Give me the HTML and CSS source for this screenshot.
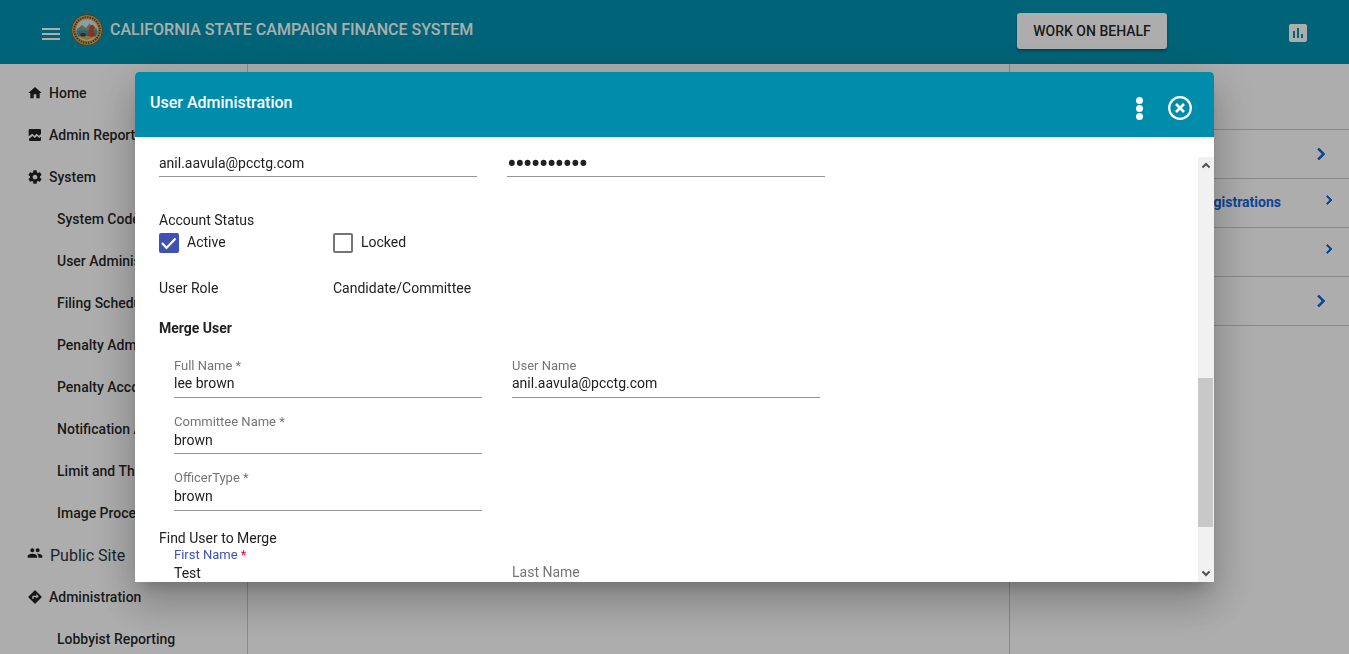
FILE: index.html
```html
<!DOCTYPE html>
<html lang="en">

<head>
    <meta charset="UTF-8">
    <title>California State Campaign Finance System</title>
    <link rel="stylesheet" href="styles.css">
</head>

<body>
<header class="topbar">
    <svg class="menu-icon" viewBox="0 0 24 24"><path d="M3 18h18v-2H3v2zm0-5h18v-2H3v2zm0-7v2h18V6H3z"/></svg>
    <svg class="seal" viewBox="0 0 32 32">
        <circle cx="16" cy="16" r="15.500" fill="#d2ab5e"/>
        <circle cx="16" cy="16" r="15.500" fill="none" stroke="#7a5a2a" stroke-width="1"/>
        <circle cx="16" cy="16" r="12.800" fill="none" stroke="#6b5024" stroke-width="2" stroke-dasharray="1.500 1"/>
        <circle cx="16" cy="16" r="10.800" fill="#cfe6ee"/>
        <path d="M6 15l5-4 4 3 4-5 7 6v2H6z" fill="#7fa283"/>
        <path d="M5.300 16.500h21.400a10.800 10.800 0 0 1-2.400 6.500H7.700a10.800 10.800 0 0 1-2.400-6.500z" fill="#3c93b5"/>
        <path d="M7.700 22h16.600a10.800 10.800 0 0 1-16.600 0z" fill="#c9b24a"/>
        <path d="M17 22l1.500-9 3-2.500 2 2-1 4 1.500 5-3 1.500z" fill="#d8432e"/>
        <circle cx="20.500" cy="9.500" r="1.600" fill="#f0e4c0"/>
        <path d="M9 20c2-1.500 4-1.500 6 0l-1 2.500H10z" fill="#5a3c1c"/>
    </svg>
    <div class="app-title">CALIFORNIA STATE CAMPAIGN FINANCE SYSTEM</div>
    <button class="btn-behalf">WORK ON BEHALF</button>
    <svg class="poll-icon" viewBox="0 0 24 24"><path fill-rule="evenodd" d="M19 3H5c-1.100 0-2 .9-2 2v14c0 1.100.9 2 2 2h14c1.100 0 2-.9 2-2V5c0-1.100-.9-2-2-2zM9 17H7v-7h2v7zm4 0h-2V7h2v10zm4 0h-2v-4h2v4z"/></svg>
</header>

<div class="page">
    <nav class="sidebar">
        <a class="nav-item">
            <svg viewBox="0 0 24 24"><path d="M10 20v-6h4v6h5v-8h3L12 3 2 12h3v8z"/></svg>
            Home
        </a>
        <a class="nav-item">
            <svg viewBox="0 0 24 24"><path fill-rule="evenodd" d="M5 3h14a2 2 0 0 1 2 2v5.500l-3 2.500-3.500-3-3.500 3-3-3-5.500 4V5a2 2 0 0 1 2-2zM3 17.500l5.500-4 3 3 3.500-3 3.500 3 2.500-2V19a2 2 0 0 1-2 2H5a2 2 0 0 1-2-2z"/></svg>
            Admin Reports
        </a>
        <a class="nav-item">
            <svg viewBox="0 0 24 24"><path d="M19.430 12.980c.04-.32.07-.64.07-.98s-.03-.66-.07-.98l2.110-1.650c.19-.15.24-.42.12-.64l-2-3.460c-.12-.22-.39-.3-.61-.22l-2.490 1c-.52-.4-1.080-.73-1.690-.98l-.38-2.650A.488.488 0 0 0 14 2h-4c-.25 0-.46.18-.49.420l-.38 2.650c-.61.25-1.170.59-1.690.98l-2.490-1c-.23-.09-.49 0-.61.220l-2 3.460c-.13.22-.07.490.12.640l2.110 1.650c-.04.32-.07.65-.07.98s.03.660.07.980l-2.110 1.650c-.19.150-.24.420-.12.640l2 3.460c.12.220.39.300.61.220l2.490-1c.52.400 1.080.730 1.690.980l.38 2.650c.03.240.24.420.49.420h4c.25 0 .46-.18.49-.42l.38-2.650c.61-.25 1.170-.59 1.690-.98l2.490 1c.23.090.49 0 .61-.22l2-3.460c.12-.22.07-.49-.12-.64l-2.110-1.650zM12 15.500c-1.930 0-3.500-1.570-3.500-3.500s1.570-3.500 3.500-3.500 3.500 1.570 3.500 3.500-1.570 3.500-3.500 3.500z"/></svg>
            System
        </a>
        <a class="nav-item sub">System Codes</a>
        <a class="nav-item sub">User Administration</a>
        <a class="nav-item sub">Filing Schedule</a>
        <a class="nav-item sub">Penalty Admin</a>
        <a class="nav-item sub">Penalty Account</a>
        <a class="nav-item sub">Notification Admin</a>
        <a class="nav-item sub">Limit and Thresholds</a>
        <a class="nav-item sub">Image Processing</a>
        <a class="nav-item public">
            <svg viewBox="0 0 24 24"><path d="M16 11c1.660 0 2.990-1.340 2.990-3S17.660 5 16 5c-1.660 0-3 1.340-3 3s1.340 3 3 3zm-8 0c1.660 0 2.990-1.340 2.990-3S9.660 5 8 5C6.340 5 5 6.340 5 8s1.340 3 3 3zm0 2c-2.330 0-7 1.170-7 3.500V19h14v-2.500c0-2.330-4.670-3.500-7-3.500zm8 0c-.29 0-.62.020-.97.050 1.160.840 1.970 1.970 1.970 3.450V19h6v-2.500c0-2.330-4.670-3.500-7-3.500z"/></svg>
            Public Site
        </a>
        <a class="nav-item">
            <svg viewBox="0 0 24 24"><path fill-rule="evenodd" d="M21.710 11.290l-9-9a.996.996 0 0 0-1.410 0l-9 9a.996.996 0 0 0 0 1.410l9 9c.39.39 1.020.39 1.410 0l9-9a.996.996 0 0 0 0-1.410zM14 14.500V12h-4v3H8v-4c0-.55.45-1 1-1h5V7.500l3.500 3.500-3.500 3.500z"/></svg>
            Administration
        </a>
        <a class="nav-item sub">Lobbyist Reporting</a>
    </nav>

    <main class="content"></main>

    <aside class="side-panel">
        <div class="panel-row">
            <svg class="chevron" viewBox="0 0 24 24"><path d="M10 6L8.590 7.410 13.170 12l-4.580 4.590L10 18l6-6z"/></svg>
        </div>
        <div class="panel-row small">
            <span class="panel-link">Candidate Registrations</span>
            <svg class="chevron" viewBox="0 0 24 24"><path d="M10 6L8.590 7.410 13.170 12l-4.580 4.590L10 18l6-6z"/></svg>
        </div>
        <div class="panel-row small">
            <svg class="chevron" viewBox="0 0 24 24"><path d="M10 6L8.590 7.410 13.170 12l-4.580 4.590L10 18l6-6z"/></svg>
        </div>
        <div class="panel-row">
            <svg class="chevron" viewBox="0 0 24 24"><path d="M10 6L8.590 7.410 13.170 12l-4.580 4.590L10 18l6-6z"/></svg>
        </div>
    </aside>
</div>

<div class="backdrop"></div>

<section class="dialog">
    <div class="dialog-head">
        <h2>User Administration</h2>
        <div class="dots"><i></i><i></i><i></i></div>
        <svg class="close-icon" viewBox="0 0 24 24"><circle cx="12" cy="12" r="10.800" fill="none" stroke="#fff" stroke-width="2.200"/><path d="M8 8l8 8M16 8l-8 8" stroke="#fff" stroke-width="2.600" fill="none"/></svg>
    </div>
    <div class="dialog-body">
        <div class="scroll-area">
            <div class="cred-row">
                <div class="cred-field">anil.aavula@pcctg.com</div>
                <div class="cred-field pass">••••••••••</div>
            </div>

            <div class="status-title">Account Status</div>
            <div class="check-row">
                <label class="check">
                    <span class="box on"><svg viewBox="0 0 20 20"><path d="M3 10l4.500 5L16.500 5.500" fill="none" stroke="#fff" stroke-width="2.200"/></svg></span>
                    Active
                </label>
                <label class="check">
                    <span class="box"></span>
                    Locked
                </label>
            </div>

            <div class="role-row">
                <span class="role-label">User Role</span>
                <span>Candidate/Committee</span>
            </div>

            <div class="merge-title">Merge User</div>

            <div class="merge-fields">
                <div class="merge-row">
                    <div class="mfield"><label>Full Name *</label><div class="val">lee brown</div></div>
                    <div class="mfield"><label>User Name</label><div class="val">anil.aavula@pcctg.com</div></div>
                </div>
                <div class="merge-row">
                    <div class="mfield"><label>Committee Name *</label><div class="val">brown</div></div>
                </div>
                <div class="merge-row">
                    <div class="mfield"><label>OfficerType *</label><div class="val">brown</div></div>
                </div>
            </div>

            <div class="find-title">Find User to Merge</div>
            <div class="merge-fields find-fields">
                <div class="merge-row">
                    <div class="mfield focused"><label>First Name <b>*</b></label><div class="val">Test</div></div>
                    <div class="mfield empty"><label>Last Name</label></div>
                </div>
            </div>
        </div>
        <div class="scrollbar">
            <svg class="sb-arrow" viewBox="0 0 16 16"><path d="M4.500 10L8 6.500 11.500 10" fill="none" stroke="#505050" stroke-width="2"/></svg>
            <div class="sb-thumb"></div>
            <svg class="sb-arrow down" viewBox="0 0 16 16"><path d="M4.500 6L8 9.500 11.500 6" fill="none" stroke="#505050" stroke-width="2"/></svg>
        </div>
    </div>
</section>

</body>

</html>
```

FILE: styles.css
```css
* {
    box-sizing: border-box;
}

html, body {
    height: 100%;
}

body {
    margin: 0;
    overflow: hidden;
    font-family: 'Roboto', sans-serif;
    font-size: 14px;
    color: #212121;
    background: #fff;
}

.topbar {
    height: 64px;
    display: flex;
    align-items: center;
    background: #0093b0;
    color: #fff;
}

.menu-icon {
    width: 24px;
    height: 24px;
    margin: 3px 0 0 39px;
    fill: #fff;
}

.seal {
    width: 32px;
    height: 32px;
    margin: -5px 0 0 8px;
}

.app-title {
    margin: -6px 0 0 7px;
    width: 907px;
    font-size: 16px;
    font-weight: 500;
}

.btn-behalf {
    width: 150px;
    height: 36px;
    margin-top: -2px;
    border: 0;
    border-radius: 3px;
    background: #fff;
    color: rgba(0, 0, 0, .87);
    font-family: inherit;
    font-size: 14px;
    font-weight: 500;
    box-shadow: 0 2px 3px rgba(0, 0, 0, .35);
}

.poll-icon {
    width: 24px;
    height: 24px;
    margin: 2px 0 0 119px;
    fill: #fff;
}

.page {
    height: calc(100% - 64px);
    display: flex;
    overflow: hidden;
}

.sidebar {
    width: 248px;
    flex: none;
    padding-top: 8px;
    border-right: 1px solid #ccc;
}

.nav-item {
    height: 42px;
    padding-left: 27px;
    display: flex;
    align-items: center;
    font-weight: 500;
    color: rgba(0, 0, 0, .87);
    white-space: nowrap;
}

.nav-item svg {
    width: 16px;
    height: 16px;
    margin-right: 6px;
    fill: rgba(0, 0, 0, .87);
}

.nav-item.sub {
    padding-left: 57px;
}

.nav-item.public {
    font-size: 16px;
    font-weight: 400;
    color: #2a3440;
}

.nav-item.public svg {
    margin: -4px 7px 0 0;
}

.content {
    flex: 1;
}

.side-panel {
    width: 340px;
    flex: none;
    padding-top: 65px;
    border-left: 1px solid #ccc;
}

.panel-row {
    height: 49px;
    padding-right: 16px;
    display: flex;
    justify-content: flex-end;
    align-items: center;
    border-top: 1px solid #ccc;
}

.panel-row:last-child {
    height: 50px;
    border-bottom: 1px solid #ccc;
}

.panel-row.small {
    padding-right: 11px;
}

.chevron {
    width: 24px;
    height: 24px;
    fill: #1565e0;
    stroke: #1565e0;
    stroke-width: .7;
}

.small .chevron {
    width: 18px;
    height: 18px;
    margin-top: -7px;
    stroke-width: 1.2;
}

.panel-link {
    margin: -2px 39px 0 0;
    font-weight: 700;
    color: #1565e0;
    white-space: nowrap;
}

.backdrop {
    position: fixed;
    inset: 0;
    background: rgba(0, 0, 0, .32);
}

.dialog {
    position: fixed;
    left: 135px;
    top: 72px;
    width: 1079px;
    height: 510px;
    display: flex;
    flex-direction: column;
    background: #fff;
    border-radius: 4px 4px 0 0;
    box-shadow: 0 11px 15px -7px rgba(0, 0, 0, .2), 0 24px 38px 3px rgba(0, 0, 0, .14), 0 9px 46px 8px rgba(0, 0, 0, .12);
}

.dialog-head {
    height: 65px;
    flex: none;
    display: flex;
    align-items: center;
    padding: 0 22px 0 15px;
    background: #008cab;
    border-radius: 4px 4px 0 0;
    color: #fff;
}

.dialog-head h2 {
    flex: 1;
    margin: -5px 0 0;
    font-size: 16px;
    font-weight: 500;
}

.dots {
    display: flex;
    flex-direction: column;
    gap: 1px;
    margin: 7px 25px 0 0;
}

.dots i {
    width: 7px;
    height: 7px;
    border-radius: 50%;
    background: #fff;
}

.close-icon {
    width: 24px;
    height: 24px;
    margin-top: 7px;
}

.dialog-body {
    flex: 1;
    min-height: 0;
    display: flex;
    padding-top: 20px;
}

.scroll-area {
    flex: 1;
    overflow: hidden;
    padding-left: 24px;
    line-height: 16px;
}

.cred-row {
    display: flex;
    gap: 30px;
}

.cred-field {
    width: 318px;
    height: 20px;
    line-height: 12px;
    border-bottom: 1px solid #949494;
}

.cred-field.pass {
    padding-top: 1px;
    font-size: 29px;
    letter-spacing: -1.85px;
}

.status-title {
    margin-top: 35px;
}

.check-row {
    display: flex;
    margin-top: 4px;
}

.check {
    width: 174px;
    height: 21px;
    display: flex;
    align-items: flex-start;
    gap: 8px;
    line-height: 20px;
}

.box {
    width: 20px;
    height: 20px;
    margin-top: 1px;
    border: 2px solid #757575;
    border-radius: 2px;
}

.box.on {
    border: 0;
    background: #3f51b5;
}

.box svg {
    display: block;
}

.role-row {
    display: flex;
    margin-top: 27px;
}

.role-label {
    width: 174px;
}

.merge-title {
    margin-top: 24px;
    font-weight: 700;
}

.merge-fields {
    margin-top: 23px;
    padding-left: 15px;
}

.merge-row {
    display: flex;
    gap: 30px;
    margin-bottom: 17px;
}

.merge-row:last-child {
    margin-bottom: 0;
}

.merge-row:nth-child(3) .mfield {
    height: 40px;
}

.mfield {
    width: 308px;
    height: 39px;
    border-bottom: 1px solid #949494;
}

.mfield label {
    display: block;
    height: 14px;
    line-height: 14px;
    font-size: 13px;
    color: #757575;
}

.mfield .val {
    margin-top: 2px;
}

.merge-row + .merge-row .val,
.focused .val {
    margin-top: 3px;
}

.focused label {
    color: #3f51b5;
}

.focused b {
    font-weight: 400;
    color: #f50057;
}

.empty label {
    padding-top: 16px;
    font-size: 14px;
    line-height: 16px;
    height: auto;
}

.find-title {
    margin-top: 19px;
}

.find-fields {
    margin-top: 2px;
}

.scrollbar {
    width: 16px;
    flex: none;
    display: flex;
    flex-direction: column;
    background: #f1f1f1;
}

.sb-arrow {
    width: 16px;
    height: 17px;
    flex: none;
}

.sb-arrow.down {
    margin-top: auto;
}

.sb-thumb {
    width: 15px;
    height: 149px;
    margin-top: 204px;
    background: #c8c8c8;
}
```
